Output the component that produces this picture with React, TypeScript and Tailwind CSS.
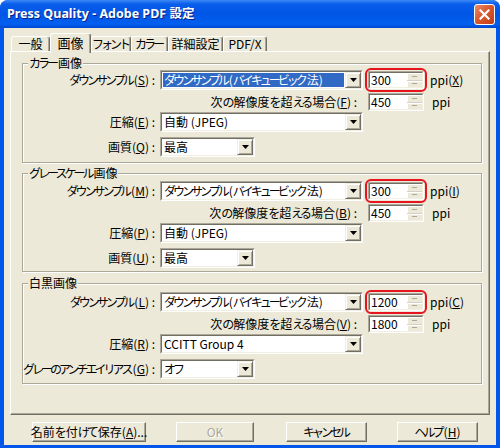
import React from "react";

// XP classic control colours, MS UI Gothic stand-in
const FONT =
  "font-['Noto_Sans_CJK_JP','Liberation_Sans',sans-serif] [font-feature-settings:\"palt\"_1] [font-variant-east-asian:proportional-width]";

// kana runs are narrow in MS UI Gothic, squeeze them
function K({ children }: { children: React.ReactNode }) {
  return <span className="tracking-[-3px] mr-[2px]">{children}</span>;
}

function Arrow() {
  return (
    <svg width="7" height="4" viewBox="0 0 7 4">
      <path d="M0 0h7L3.5 4z" fill="#000" />
    </svg>
  );
}

function Select({ text, width, selected }: { text: React.ReactNode; width: string; selected?: boolean }) {
  return (
    <div className={`${width} h-[20px] border border-t-[#ACA899] border-l-[#ACA899] border-b-white border-r-white`}>
      <div className="h-full flex border border-t-[#716F64] border-l-[#716F64] border-b-[#F1EFE2] border-r-[#F1EFE2] bg-white">
        <div className="flex-1 flex items-center p-[1px] min-w-0">
          <span
            className={`h-full flex-1 flex items-center pl-[1px] whitespace-nowrap overflow-hidden ${
              selected ? "bg-[#316AC5] text-white" : "text-black"
            }`}
          >
            {text}
          </span>
        </div>
        <div className="w-[16px] h-full flex items-center justify-center bg-[#ECE9D8] border border-t-[#F1EFE2] border-l-[#F1EFE2] border-b-[#716F64] border-r-[#716F64] shadow-[inset_1px_1px_0_#fff,inset_-1px_-1px_0_#ACA899]">
          <Arrow />
        </div>
      </div>
    </div>
  );
}

function Spin({ value, marked }: { value: string; marked?: boolean }) {
  return (
    <div className="relative w-[56px] h-[18px]">
      <div className="h-full border border-t-[#ACA899] border-l-[#ACA899] border-b-white border-r-white">
        <div className="h-full flex border border-t-[#716F64] border-l-[#716F64] border-b-[#F1EFE2] border-r-[#F1EFE2] bg-white">
          <span className="flex-1 flex items-center pl-[1px] text-black">{value}</span>
          <div className="w-[15px] h-full flex flex-col">
            <div className="flex-1 flex items-center justify-center bg-[#ECE9D8] border-b border-b-[#D4D0C8] shadow-[inset_1px_1px_0_#fff]">
              <span className="w-[5px] h-[1px] bg-[#ACA899]" />
            </div>
            <div className="flex-1 flex items-center justify-center bg-[#ECE9D8] shadow-[inset_1px_1px_0_#fff]">
              <span className="w-[5px] h-[1px] bg-[#ACA899]" />
            </div>
          </div>
        </div>
      </div>
      {marked && (
        <div className="absolute -left-[3px] -top-[3px] -right-[3px] -bottom-[3px] rounded-[6px] border-2 border-[#E5141E]" />
      )}
    </div>
  );
}

function Label({ w, children }: { w: string; children: React.ReactNode }) {
  return (
    <div className={`${w} shrink-0 flex justify-end`}>
      <span className="whitespace-nowrap">{children}</span>
    </div>
  );
}

const downText = (
  <>
    <K>ダウンサンプル</K> (<K>バイキュービック</K>法)
  </>
);

type GroupProps = {
  title: React.ReactNode;
  h: string;
  pt: string;
  down: string;
  res: string;
  comp: string;
  ppi: string;
  v1: string;
  v2: string;
  compText: string;
  lastLabel: React.ReactNode;
  lastKey: string;
  lastText: React.ReactNode;
  focus?: boolean;
};

function Group(p: GroupProps) {
  return (
    <div className={`relative ${p.h} border border-[#ACA899] shadow-[inset_1px_1px_0_#fff,1px_1px_0_#fff]`}>
      <span className="absolute left-[5px] -top-[8px] px-[1px] bg-[#ECE9D8] leading-[14px] whitespace-nowrap">{p.title}</span>
      <div className={`flex flex-col ${p.pt}`}>
        <div className="h-[20px] flex items-center">
          <Label w="w-[132px]">
            <K>ダウンサンプル</K>(<u>{p.down}</u>) :
          </Label>
          <div className="ml-[5px]">
            <Select text={downText} width="w-[203px]" selected={p.focus} />
          </div>
          <div className="ml-[5px]">
            <Spin value={p.v1} marked />
          </div>
          <span className="ml-[6px]">
            ppi(<u>{p.ppi}</u>)
          </span>
        </div>
        <div className="h-[18px] mt-[3px] flex items-center">
          <Label w="w-[334px]">
            次<K>の</K>解像度<K>を</K>超<K>える</K>場合(<u>{p.res}</u>) :
          </Label>
          <div className="ml-[11px]">
            <Spin value={p.v2} />
          </div>
          <span className="ml-[8px]">ppi</span>
        </div>
        <div className="h-[20px] mt-[1px] flex items-center">
          <Label w="w-[132px]">
            圧縮(<u>{p.comp}</u>) :
          </Label>
          <div className="ml-[5px]">
            <Select text={p.compText} width="w-[203px]" />
          </div>
        </div>
        <div className="h-[20px] mt-[5px] flex items-center">
          <Label w="w-[132px]">
            {p.lastLabel}(<u>{p.lastKey}</u>) :
          </Label>
          <div className="ml-[5px]">
            <Select text={p.lastText} width="w-[95px]" />
          </div>
        </div>
      </div>
    </div>
  );
}

function Button({ label, w, ml, disabled }: { label: React.ReactNode; w: string; ml: string; disabled?: boolean }) {
  return (
    <div
      className={`${w} ${ml} h-[20px] flex items-center justify-center whitespace-nowrap bg-[#ECE9D8] border border-t-white border-l-white border-b-[#716F64] border-r-[#716F64] shadow-[inset_-1px_-1px_0_#ACA899] ${
        disabled ? "text-[#ACA899] [text-shadow:1px_1px_0_#fff]" : "text-black"
      }`}
    >
      {label}
    </div>
  );
}

const tabs: { t: React.ReactNode; key: string; w: string; sel?: boolean }[] = [
  { key: "g", t: "一般", w: "w-[39px]" },
  { key: "i", t: "画像", w: "w-[41px]", sel: true },
  { key: "f", t: <K>フォント</K>, w: "w-[40px]" },
  { key: "c", t: <K>カラー</K>, w: "w-[37px]" },
  { key: "d", t: "詳細設定", w: "w-[55px]" },
  { key: "p", t: "PDF/X", w: "w-[44px]" },
];

export default function App() {
  return (
    <div className={`w-[500px] h-[448px] flex flex-col bg-[#0055EA] rounded-t-[8px] overflow-hidden text-[12px] leading-[14px] ${FONT}`}>
      {/* title bar */}
      <div className="h-[28px] shrink-0 flex items-center pl-[7px] pr-[5px] bg-[linear-gradient(to_bottom,#3D8AF7_0%,#0A5EEB_14%,#0055E5_50%,#0260EF_86%,#0046D0_100%)]">
        <span className="text-white font-bold text-[12.5px] font-['Noto_Sans','Noto_Sans_CJK_JP',sans-serif] [text-shadow:1px_1px_0_#0A1F8A]">
          Press Quality - Adobe PDF 設定
        </span>
        <div className="ml-auto w-[21px] h-[21px] rounded-[3px] border border-white flex items-center justify-center bg-[linear-gradient(135deg,#EB8D6C_0%,#DA5A30_45%,#C23A17_100%)]">
          <svg width="11" height="11" viewBox="0 0 11 11">
            <path d="M1.5 1.5l8 8M9.5 1.5l-8 8" stroke="#fff" strokeWidth="2.2" strokeLinecap="square" />
          </svg>
        </div>
      </div>

      {/* client */}
      <div className="flex-1 mx-[4px] mb-[3px] bg-[#ECE9D8] flex flex-col px-[6px] text-black">
        <div className="h-[23px] flex items-end pl-[1px]">
          {tabs.map((tab) =>
            tab.sel ? (
              <div
                key={tab.key}
                className={`${tab.w} h-[20px] -mb-[2px] relative z-10 flex items-start justify-center pt-[2px] bg-[#ECE9D8] border-t border-l border-white border-r border-r-[#716F64] rounded-t-[3px] shadow-[inset_-1px_0_0_#ACA899] text-[13px]`}
              >
                {tab.t}
              </div>
            ) : (
              <div
                key={tab.key}
                className={`${tab.w} h-[15px] flex items-center justify-center bg-[#ECE9D8] border-t border-l border-white border-r border-r-[#716F64] rounded-t-[3px] shadow-[inset_-1px_0_0_#ACA899] whitespace-nowrap`}
              >
                {tab.t}
              </div>
            )
          )}
        </div>

        <div className="h-[364px] flex flex-col pl-[11px] pr-[7px] pt-[11px] border border-t-white border-l-white border-b-[#716F64] border-r-[#716F64] shadow-[inset_-1px_-1px_0_#ACA899]">
          <Group
            title={<><K>カラー</K>画像</>}
            h="h-[100px]"
            pt="pt-[6px]"
            down="S"
            res="F"
            comp="E"
            ppi="X"
            v1="300"
            v2="450"
            compText="自動 (JPEG)"
            lastLabel="画質"
            lastKey="Q"
            lastText="最高"
            focus
          />
          <div className="mt-[10px]">
            <Group
              title={<><K>グレースケール</K>画像</>}
              h="h-[99px]"
              pt="pt-[7px]"
              down="M"
              res="B"
              comp="P"
              ppi="I"
              v1="300"
              v2="450"
              compText="自動 (JPEG)"
              lastLabel="画質"
              lastKey="U"
              lastText="最高"
            />
          </div>
          <div className="mt-[11px]">
            <Group
              title="白黒画像"
              h="h-[101px]"
              pt="pt-[8px]"
              down="L"
              res="V"
              comp="R"
              ppi="C"
              v1="1200"
              v2="1800"
              compText="CCITT Group 4"
              lastLabel={<K>グレーのアンチエイリアス</K>}
              lastKey="G"
              lastText={<K>オフ</K>}
            />
          </div>
        </div>

        <div className="flex mt-[7px]">
          <Button
            label={
              <>
                名前<K>を</K>付<K>けて</K>保存(<u>A</u>)...
              </>
            }
            w="w-[114px]"
            ml="ml-[22px]"
          />
          <Button label="OK" w="w-[78px]" ml="ml-[30px]" disabled />
          <Button label={<K>キャンセル</K>} w="w-[81px]" ml="ml-[32px]" />
          <Button
            label={
              <>
                <K>ヘルプ</K>(<u>H</u>)
              </>
            }
            w="w-[81px]"
            ml="ml-[30px]"
          />
        </div>
      </div>
    </div>
  );
}
